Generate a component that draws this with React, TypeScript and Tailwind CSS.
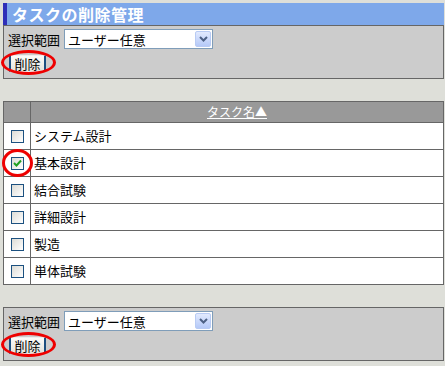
import React from 'react';

const tasks = [
    { name: 'システム設計', checked: false },
    { name: '基本設計', checked: true },
    { name: '結合試験', checked: false },
    { name: '詳細設計', checked: false },
    { name: '製造', checked: false },
    { name: '単体試験', checked: false },
];

const font = "font-['MS_Gothic','Noto_Sans_CJK_JP',sans-serif]";

const SelectBox: React.FC = () => (
    <div className="flex h-[20px] w-[149px] items-center border border-[#7f9db9] bg-white pl-[3px] pr-[1px]">
        <span className="flex-1 text-[13px] leading-none text-black">ユーザー任意</span>
        <div className="flex h-[16px] w-[16px] items-center justify-center rounded-[2px] border border-[#b8cbf4] bg-gradient-to-b from-[#e2eafe] to-[#b5c9f8]">
            <svg width="9" height="6" viewBox="0 0 9 6">
                <path d="M1 1 L4.5 4.5 L8 1" fill="none" stroke="#4d6185" strokeWidth="2" />
            </svg>
        </div>
    </div>
);

const DeleteButton: React.FC = () => (
    <div className="relative w-fit">
        <div className="flex h-[17px] w-[37px] items-center justify-center border-x-2 border-y border-x-[#1c4f80] border-y-[#eeeeee] bg-gradient-to-b from-[#fbfbf9] to-[#e4e3dc] text-[13px] leading-none text-black">
            削除
        </div>
        <div className="pointer-events-none absolute left-[-8px] top-[-5px] h-[25px] w-[55px] rounded-[50%] border-[3px] border-[#ee0000]" />
    </div>
);

const ControlPanel: React.FC = () => (
    <div className="flex h-[54px] flex-col gap-[6px] border border-[#666666] bg-[#cccccc] pl-[4px] pt-[3px]">
        <div className="flex items-center gap-[4px]">
            <span className="text-[13px] leading-none text-black">選択範囲</span>
            <SelectBox />
        </div>
        <div className="pl-[1px]">
            <DeleteButton />
        </div>
    </div>
);

const Checkbox: React.FC<{ checked: boolean }> = ({ checked }) => (
    <div className="flex h-[13px] w-[13px] items-center justify-center border border-[#1c5180] bg-gradient-to-br from-[#dcdcd6] to-white">
        {checked && (
            <svg width="9" height="8" viewBox="0 0 9 8">
                <path d="M1 4 L3.5 6.5 L8 1.5" fill="none" stroke="#21a121" strokeWidth="2" />
            </svg>
        )}
    </div>
);

export default function App() {
    return (
        <div className={`${font} min-h-[366px] w-[445px] bg-[#dedfd9] pl-[3px] pr-[1px] pt-[3px]`}>
            {/* Top panel */}
            <div className="relative flex h-[22px] items-center bg-[#7ea8ea] pl-[9px]">
                <div className="absolute bottom-0 left-0 top-0 w-[4px] bg-[#2f2fb8]" />
                <span className="text-[16px] font-bold leading-none tracking-[0.5px] text-white">タスクの削除管理</span>
            </div>
            <ControlPanel />

            {/* Task table */}
            <table className="mt-[22px] w-full border-collapse border border-[#666666] bg-white text-[13px] text-black">
                <thead>
                    <tr className="h-[21px] bg-[#999999]">
                        <th className="w-[27px] border border-[#666666]" />
                        <th className="border border-[#666666] text-center text-[12px] font-normal text-white underline">
                            タスク名▲
                        </th>
                    </tr>
                </thead>
                <tbody>
                    {tasks.map((task) => (
                        <tr key={task.name} className="h-[27px]">
                            <td className="border border-[#666666]">
                                <div className="relative flex justify-center">
                                    <Checkbox checked={task.checked} />
                                    {task.checked && (
                                        <div className="pointer-events-none absolute left-[-2px] top-[-8px] h-[28px] w-[31px] rounded-[50%] border-[3px] border-[#ee0000]" />
                                    )}
                                </div>
                            </td>
                            <td className="border border-[#666666] pl-[3px]">{task.name}</td>
                        </tr>
                    ))}
                </tbody>
            </table>

            {/* Bottom panel */}
            <div className="mt-[22px]">
                <ControlPanel />
            </div>
        </div>
    );
}
